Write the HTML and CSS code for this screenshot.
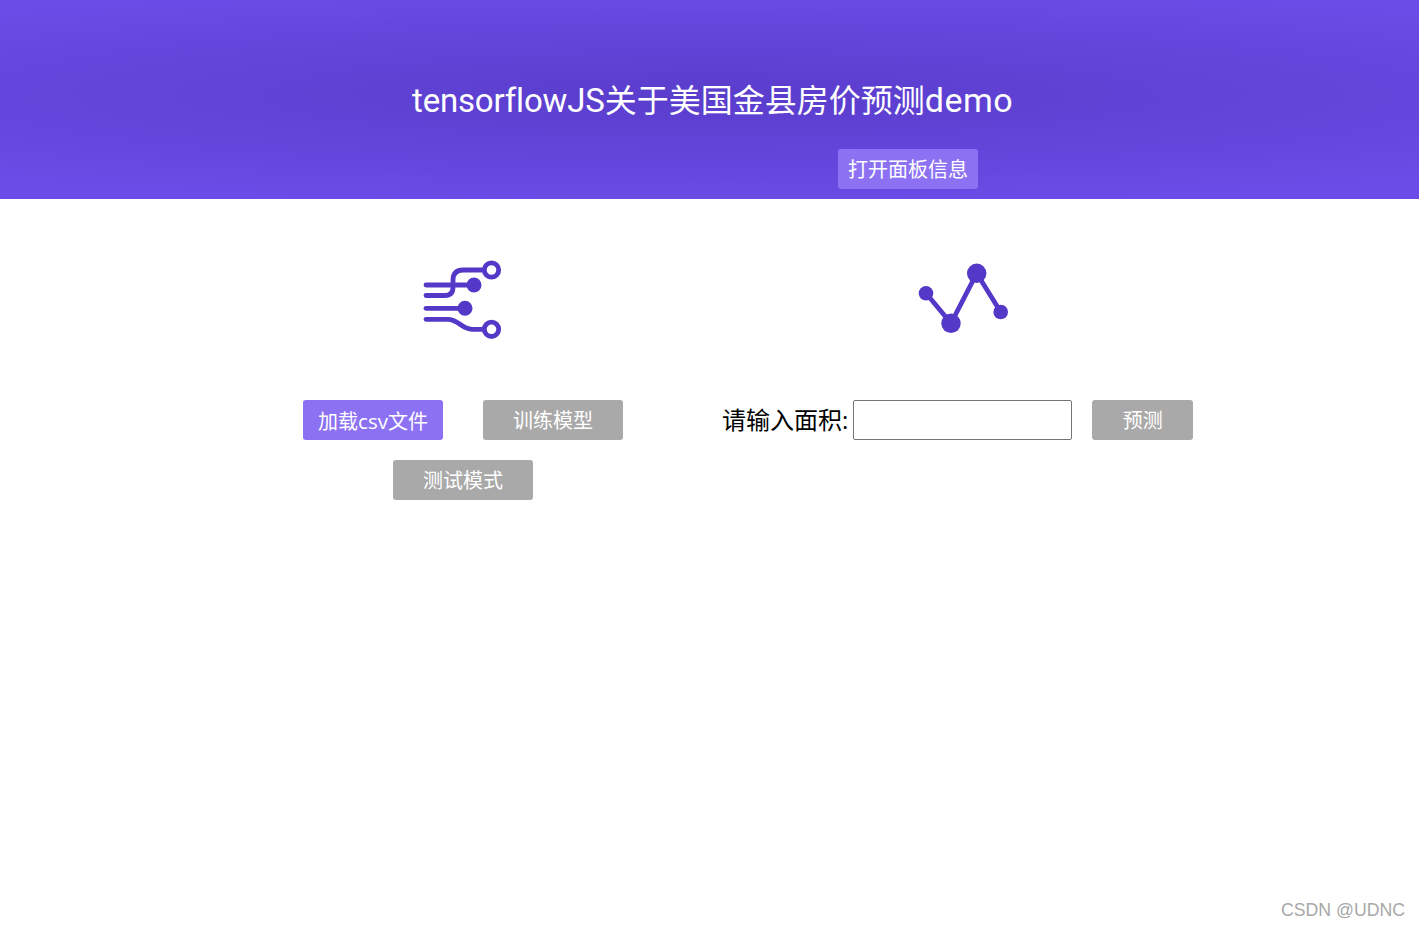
FILE: index.html
```html
<!DOCTYPE html>
<html lang="zh-CN">
<head>
<meta charset="utf-8">
<title>tensorflowJS关于美国金县房价预测demo</title>
<link rel="stylesheet" href="styles.css">
</head>
<body>
<header class="hero">
  <h1 class="hero-title"><span class="latin">tensorflowJS</span>关于美国金县房价预测<span class="latin latin-end">demo</span></h1>
  <div class="hero-actions"><button class="btn btn-panel" type="button">打开面板信息</button></div>
</header>
<main class="panels">
  <section class="panel panel-train">
    <svg class="icon" viewBox="0 0 100 100" width="100" height="100" aria-hidden="true">
      <g fill="none" stroke="#5438c8" stroke-width="4.8" stroke-linecap="round">
        <path d="M13 45.5H32Q40 45.5 40 37V30Q40 20 50 20H70"/>
        <path d="M13 35H61"/>
        <path d="M13 58.3H52"/>
        <path d="M13 69.3H35C45 69.3 49 79.3 59 79.3H70"/>
        <circle cx="78.5" cy="20" r="7.2"/>
        <circle cx="78.5" cy="79.3" r="7.2"/>
      </g>
      <circle cx="61" cy="35" r="7.5" fill="#5438c8"/>
      <circle cx="52" cy="58.3" r="7.5" fill="#5438c8"/>
    </svg>
    <div class="actions">
      <button class="btn btn-active" type="button">加载<span class="latin-small">csv</span>文件</button>
      <button class="btn btn-off" type="button">训练模型</button>
      <button class="btn btn-off" type="button">测试模式</button>
    </div>
  </section>
  <section class="panel panel-predict">
    <svg class="icon" viewBox="0 0 100 100" width="100" height="100" aria-hidden="true">
      <path d="M13 43.3L38 73.3L63.7 23.3L87.7 62" fill="none" stroke="#5438c8" stroke-width="4.8"/>
      <circle cx="13" cy="43.3" r="7.3" fill="#5438c8"/>
      <circle cx="38" cy="73.3" r="9.7" fill="#5438c8"/>
      <circle cx="63.7" cy="23.3" r="9.7" fill="#5438c8"/>
      <circle cx="87.7" cy="62" r="7.3" fill="#5438c8"/>
    </svg>
    <div class="actions">
      <label class="area-label" for="area">请输入面积:</label>
      <input class="area-input" id="area" type="text">
      <button class="btn btn-off btn-small" type="button">预测</button>
    </div>
  </section>
</main>
<footer class="watermark">CSDN @UDNC</footer>
</body>
</html>
```
FILE: styles.css
```css
* { box-sizing: border-box; }
html, body { height: 100%; }
body {
  margin: 0;
  position: relative;
  overflow: hidden;
  background: #fff;
  font-family: "Open Sans", "Noto Sans CJK SC", sans-serif;
}
.hero {
  height: 199px;
  padding-top: 76px;
  background: radial-gradient(ellipse 1100px 110px at 710px 95px, #5a3dcc 0%, #6b4ce6 100%);
  color: #fff;
}
.hero-title {
  margin: 0;
  height: 48px;
  padding-left: 412px;
  font-size: 32px;
  line-height: 48px;
  font-weight: 400;
  white-space: nowrap;
}
.latin {
  font-family: Roboto, sans-serif;
  font-size: 33px;
  letter-spacing: -0.17px;
}
.latin-end { font-size: 34px; letter-spacing: 0.5px; }
.latin-small { font-size: 20.5px; font-weight: 500; }
.hero-actions { margin-top: 25px; padding-left: 838px; }
.btn {
  display: block;
  height: 40px;
  width: 140px;
  padding: 2px 0 0;
  border: 0;
  border-radius: 3px;
  color: #fff;
  font: inherit;
  font-size: 20px;
  line-height: 38px;
}
.btn-panel { background: #8c72f3; }
.btn-active { background: #8c72f3; }
.btn-off { background: #a9a9a9; }
.btn-small { width: 101px; }
.panels {
  display: flex;
  gap: 70px;
  padding: 51px 0 0 283px;
}
.panel { display: flex; flex-direction: column; align-items: center; }
.panel-train { width: 360px; }
.panel-predict { width: 500px; }
.icon { display: block; margin-bottom: 50px; }
.actions {
  display: flex;
  flex-wrap: wrap;
  justify-content: center;
  align-items: center;
  gap: 20px 40px;
}
.panel-predict .actions { gap: 0; width: 100%; padding-left: 9px; justify-content: flex-start; }
.area-label { font-size: 24px; line-height: 40px; color: #000; margin-right: 5px; }
.area-input {
  width: 219px;
  height: 40px;
  margin-right: 20px;
  border: 1px solid #767676;
  border-radius: 2px;
  background: #fff;
}
.watermark {
  position: absolute;
  right: 14px;
  bottom: 5px;
  font-family: "Liberation Sans", sans-serif;
  font-size: 17.7px;
  line-height: 24px;
  color: #a8a8a8;
}
```
